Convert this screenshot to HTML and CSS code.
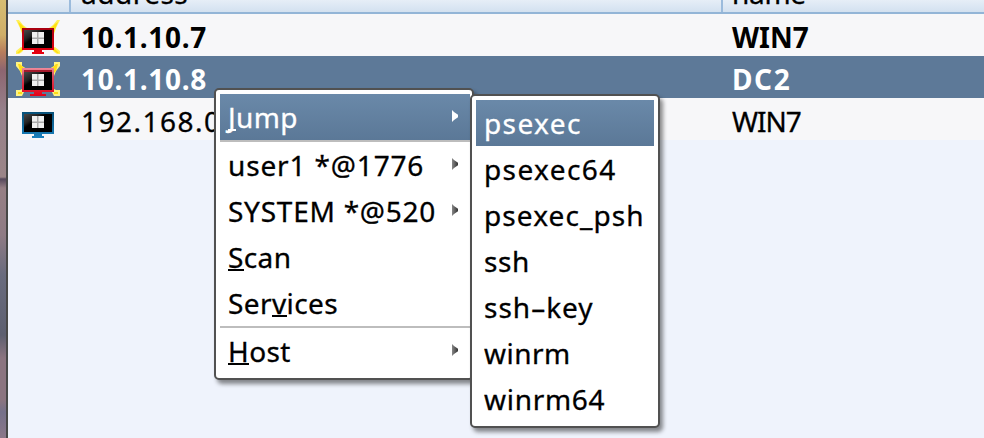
FILE: index.html
```html
<!DOCTYPE html>
<html lang="en">
<head>
<meta charset="utf-8">
<title>Targets</title>
<link rel="stylesheet" href="styles.css">
</head>
<body>
<svg class="defs" width="0" height="0">
  <defs>
    <linearGradient id="glare" x1="0" y1="0" x2="1" y2="1">
      <stop offset="0" stop-color="#484848"/><stop offset=".28" stop-color="#222"/><stop offset=".4" stop-color="#000"/>
    </linearGradient>
    <linearGradient id="red" x1="0" y1="0" x2="0" y2="1">
      <stop offset="0" stop-color="#a80010"/><stop offset="1" stop-color="#e80010"/>
    </linearGradient>
    <linearGradient id="pink" x1="0" y1="0" x2="0" y2="1">
      <stop offset="0" stop-color="#ee8a9a"/><stop offset=".3" stop-color="#d8485c"/><stop offset="1" stop-color="#e40018"/>
    </linearGradient>
    <linearGradient id="blue" x1="0" y1="0" x2="0" y2="1">
      <stop offset="0" stop-color="#075078"/><stop offset="1" stop-color="#1b80bc"/>
    </linearGradient>
    <g id="screen">
      <path d="M8 10h28v18H8z" fill="url(#glare)"/>
      <path d="M16 12h12v12H16z" fill="#f0f0f0"/>
      <path d="M21 12h1.5v12H21zM16 17.5h12V19H16z" fill="#aaa"/>
    </g>
    <g id="bolts">
      <path d="M0 0H3L7 5 11 8 6 14 4 8zM44 0H41L37 5 33 8 38 14 40 8zM0 34V31L5 27 9 28 6 32 3 34zM44 34V31L39 27 35 28 38 32 41 34z" fill="#fff05a"/>
      <path d="M2 2L5 4 9 8 6 12 4 7zM42 2L39 4 35 8 38 12 40 7zM1 33L6 28 7 30 3 33zM43 33L38 28 37 30 41 33z" fill="#ffe010"/>
    </g>
    <g id="bolts-wide">
      <path d="M0 0H6L6 4 11 7 6 14 4 9 0 4zM44 0H38L38 4 33 7 38 14 40 9 44 4zM0 34V28H4L8 26V30L6 34zM44 34V28H40L36 26V30L38 34z" fill="#fff480"/>
      <path d="M2 2H4L8 6 7 12 4 9zM42 2H40L36 6 37 12 40 9zM2 32V30H6V32zM42 32V30H38V32z" fill="#ffdc16"/>
    </g>
  </defs>
</svg>
<div class="window">
  <div class="edge"></div>
  <div class="table">
    <div class="row head"><div class="c1"></div><div class="c2"><span class="t h1">address</span></div><div class="c3"><span class="t h2">name</span></div></div>
    <div class="row bold">
      <div class="c1"><svg width="44" height="34"><use href="#bolts"/><path d="M6 8h32v22H26v2h2v2H16v-2h2v-2H6z" fill="url(#red)"/><use href="#screen"/></svg></div>
      <div class="c2"><span class="t ip1">10.1.10.7</span></div><div class="c3"><span class="t n1">WIN7</span></div>
    </div>
    <div class="row bold selected">
      <div class="c1"><svg width="44" height="34"><use href="#bolts-wide"/><path d="M6 6h32v24H26v2h4v2H14v-2h4v-2H6z" fill="url(#pink)"/><path d="M8 8h28v2H8z" fill="#a51a2c"/><use href="#screen"/></svg></div>
      <div class="c2"><span class="t ip2">10.1.10.8</span></div><div class="c3"><span class="t n2">DC2</span></div>
    </div>
    <div class="row">
      <div class="c1"><svg width="44" height="34"><path d="M6 8h32v22H26v2h2v2H16v-2h2v-2H6z" fill="url(#blue)"/><use href="#screen"/></svg></div>
      <div class="c2"><span class="t ip3">192.168.0</span></div><div class="c3"><span class="t n3">WIN7</span></div>
    </div>
  </div>
</div>
<div class="menu main">
  <div class="item on sep"><span class="t m1"><u>J</u>ump</span><i class="arrow"></i></div>
  <div class="item"><span class="t m2">user1 *@1776</span><i class="arrow"></i></div>
  <div class="item"><span class="t m3">SYSTEM *@520</span><i class="arrow"></i></div>
  <div class="item"><span class="t m4"><u>S</u>can</span></div>
  <div class="item sep"><span class="t m5">Ser<u>v</u>ices</span></div>
  <div class="item"><span class="t m6"><u>H</u>ost</span><i class="arrow"></i></div>
</div>
<div class="menu sub">
  <div class="item on"><span class="t s1">psexec</span></div>
  <div class="item"><span class="t s2">psexec64</span></div>
  <div class="item"><span class="t s3">psexec_psh</span></div>
  <div class="item"><span class="t s4">ssh</span></div>
  <div class="item"><span class="t s5">ssh–key</span></div>
  <div class="item"><span class="t s6">winrm</span></div>
  <div class="item"><span class="t s7">winrm64</span></div>
</div>
</body>
</html>
```
FILE: styles.css
```css
* { box-sizing: border-box; }
body { margin: 0; height: 438px; overflow: hidden; font: 28px/38px "Noto Sans", sans-serif; color: #000; background: #eff3fc; }
.defs { position: absolute; }
.window { display: flex; height: 438px; }
.edge { flex: none; width: 8px; border-right: 2px solid #474747; background: linear-gradient(#d7bd72 0, #cfae68 35px, #b87d5c 52px, #8d6570 70px, #96808a 110px, #9b8588 177px, #56485c 179px, #967f85 188px, #8f7b85 235px, #696b7e 275px, #5d5f70 335px, #8b7480 358px, #8b7480 400px, #75708a 412px, #8b7789 438px); }
.table { flex: 1; }
.row { display: flex; height: 42px; background: #f7f7f9; }
.c1 { flex: none; width: 63px; padding: 6px 0 0 8px; }
.c1 svg { display: block; }
.c2 { flex: none; width: 652px; padding: 4px 0 0 10px; }
.c3 { padding: 4px 0 0 9px; }
.t { display: block; white-space: pre; -webkit-text-stroke: .3px currentColor; }
.bold { font-weight: 700; }
.bold .t { -webkit-text-stroke: 0; }
.selected { color: #fff; background: #5d7998; }
.head { height: 14px; border-bottom: 2px solid #93b5d7; background: linear-gradient(#e6eef7, #d3e1f0); overflow: hidden; }
.head .c1, .head .c2 { border-right: 2px solid #9bbbdc; }
.head .t { margin-top: -30px; }
.menu { position: absolute; border: 2px solid #515151; border-radius: 5px; background: #fff; padding: 4px; line-height: 46px; box-shadow: 3px 4px 4px rgba(0,0,0,.45); }
.main { left: 214px; top: 88px; width: 260px; height: 292px; padding: 4px 2px 4px 4px; }
.sub { left: 470px; top: 94px; width: 190px; height: 334px; }
.item { display: flex; justify-content: space-between; align-items: center; height: 46px; padding: 0 12px 0 8px; }
.sep { height: 48px; border-bottom: 2px solid #bdbdbd; }
.on { color: #fff; background: linear-gradient(#6a89a9, #5b7897); }
u { text-decoration: none; box-shadow: inset 0 -2px currentColor; display: inline-block; line-height: 30px; height: 29px; }
.arrow { width: 6px; height: 12px; margin-top: -2px; background: linear-gradient(90deg, #888, #333); clip-path: polygon(0 0, 2px 2px, 100% 40%, 100% 60%, 2px 10px, 0 100%); }
.on .arrow { background: #fff; }
.h1 { letter-spacing: .5px; }
.h2 { letter-spacing: -.3px; }
.ip1, .ip2 { letter-spacing: .7px; }
.ip3 { letter-spacing: 1.5px; }
.n2 { letter-spacing: 1.6px; }
.n3 { letter-spacing: -1px; }
.m1 { letter-spacing: .4px; }
.m2 { letter-spacing: .85px; }
.m3 { letter-spacing: .75px; }
.m4, .m5, .m6 { letter-spacing: .4px; }
.s1, .s2 { letter-spacing: 1.4px; }
.s3 { letter-spacing: 1.1px; }
.s4 { letter-spacing: .6px; }
.s5 { letter-spacing: 1px; }
.s6 { letter-spacing: .5px; }
.s7 { letter-spacing: .7px; }
```
